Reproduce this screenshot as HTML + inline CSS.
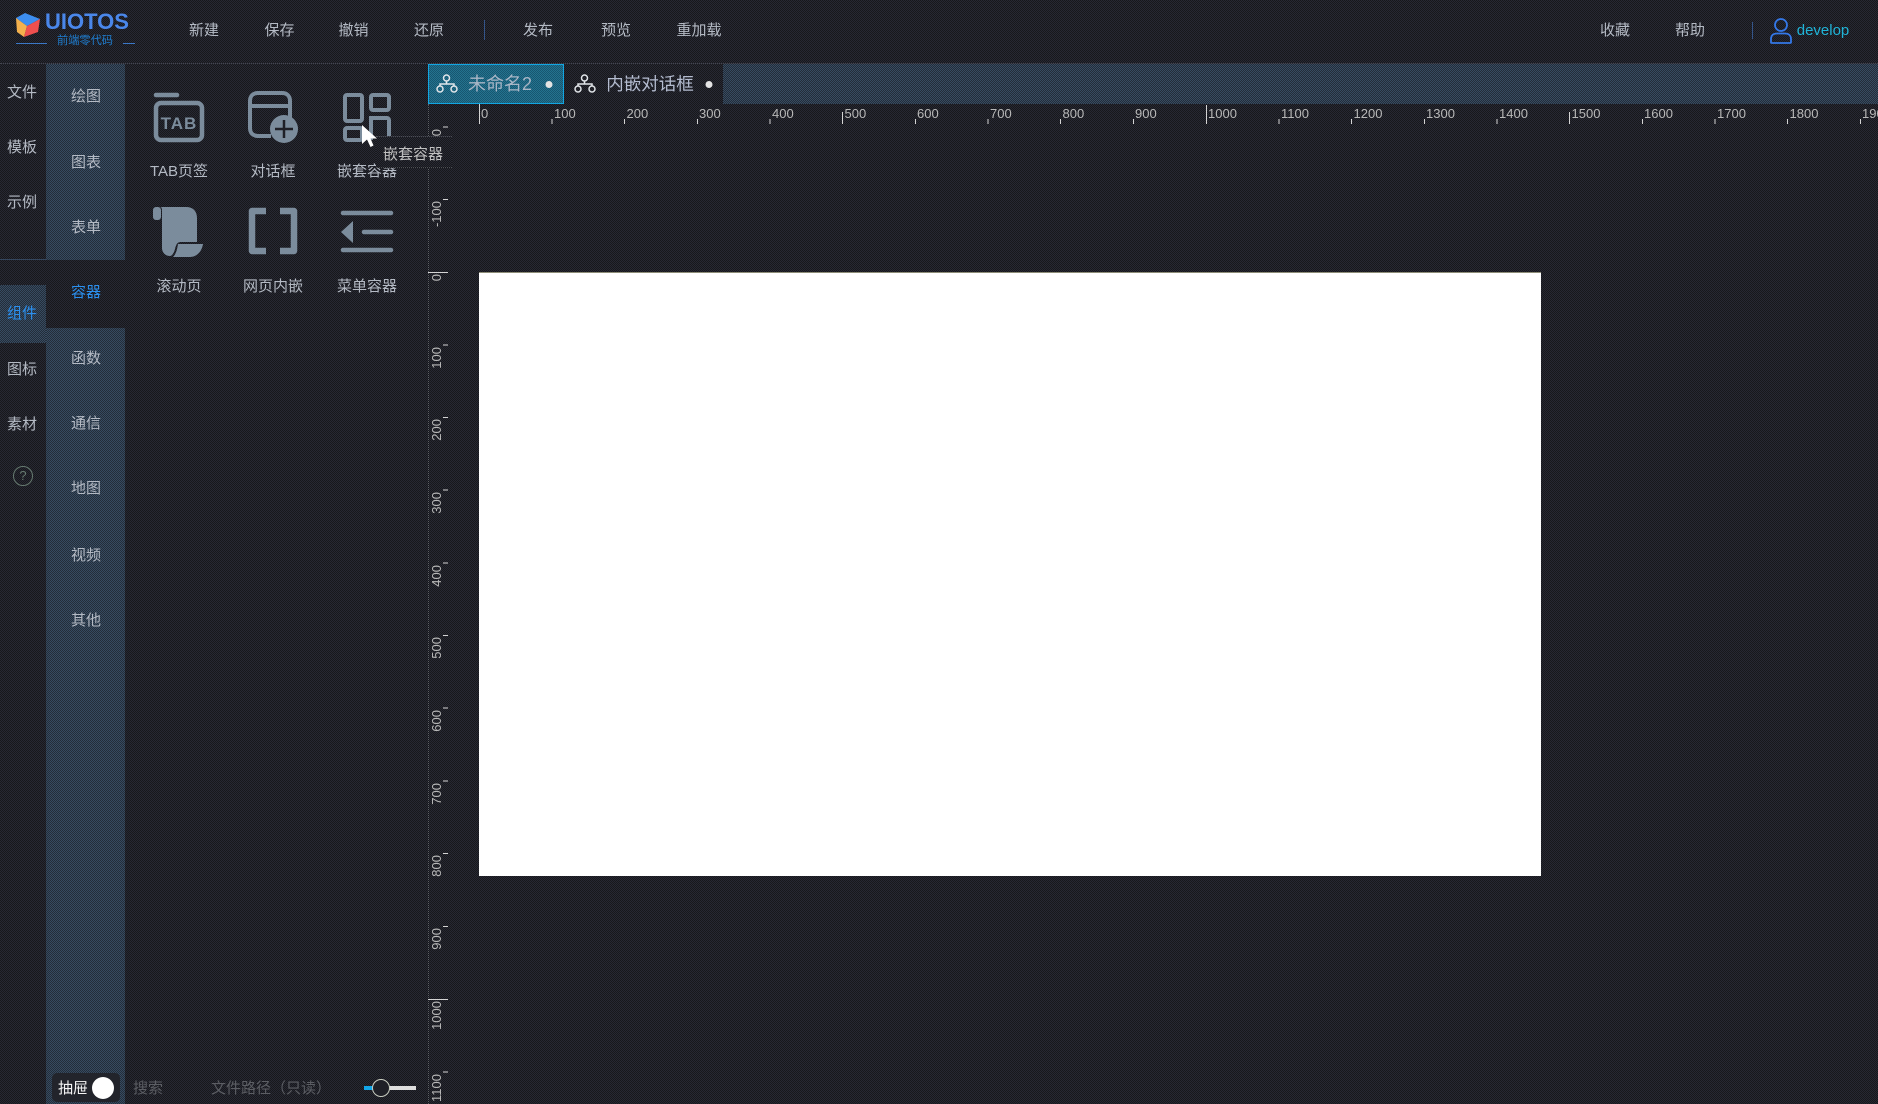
<!DOCTYPE html>
<html lang="zh"><head><meta charset="utf-8"><title>UIOTOS</title>
<style>
html,body{margin:0;padding:0;width:1878px;height:1104px;overflow:hidden}
body{position:relative;font-family:"Liberation Sans","Noto Sans CJK SC",sans-serif;color:#b4bac4;font-size:15px;
background-color:#1f2027;background-image:conic-gradient(#272833 25%,#17181b 0 50%,#272833 0 75%,#17181b 0);background-size:2px 2px}
.a{position:absolute}
.t{position:absolute;white-space:nowrap;line-height:20px;transform:translate(-50%,-50%);margin-top:2px}
.panel{background-color:#2d3c4d;background-image:conic-gradient(#374b61 25%,#232d39 0 50%,#374b61 0 75%,#232d39 0);background-size:2px 2px}
.dark{background-color:#1f2027;background-image:conic-gradient(#272833 25%,#17181b 0 50%,#272833 0 75%,#17181b 0);background-size:2px 2px}
.blue{color:#2b90ef}
svg{position:absolute;left:0;top:0}
</style></head><body>

<div class="a" style="left:0;top:63px;width:1878px;border-top:1px dotted #44464f"></div>
<div class="a panel" style="left:46px;top:64px;width:79px;height:1040px"></div>
<div class="a dark" style="left:46px;top:260px;width:79px;height:68px"></div>
<div class="a panel" style="left:0;top:285px;width:46px;height:58px"></div>
<div class="a" style="left:0;top:259px;width:46px;border-top:1px solid #34465e"></div>
<div class="a panel" style="left:723px;top:64px;width:1155px;height:40px"></div>
<div class="a" style="left:428px;top:64px;width:136px;height:40px;box-sizing:border-box;border:1.5px solid #12a6e2;background-color:#1d6582;background-image:conic-gradient(#24738f 25%,#175670 0 50%,#24738f 0 75%,#175670 0);background-size:2px 2px"></div>
<div class="a" style="left:428px;top:104px;height:1000px;border-left:1px dotted #5d6068"></div>

<!-- logo -->
<svg width="140" height="56" viewBox="0 0 140 56" style="left:0;top:0">
<path d="M16 18 L25 13 L40 19 L27 26 Z" fill="#3d8ef0"/>
<path d="M16 18 L27 26 L24 37 L17 32 Z" fill="#f4b14d"/>
<path d="M27 26 L40 19 L38 32 L24 37 Z" fill="#ef4f4f"/>
<path d="M16 43.500H47M123 43.500H135" stroke="#3b78c8" stroke-width="1"/>
</svg>
<div class="t" style="left:87px;top:20px;font-size:22px;font-weight:bold;color:#4a87ea">UIOTOS</div>
<div class="t" style="left:85px;top:39px;font-size:11.200px;color:#1f7ed0">前端零代码</div>

<!-- nav -->
<div class="t" style="left:204px;top:29px">新建</div>
<div class="t" style="left:279.500px;top:29px">保存</div>
<div class="t" style="left:353.500px;top:29px">撤销</div>
<div class="t" style="left:429px;top:29px">还原</div>
<div class="a" style="left:484px;top:20px;width:1px;height:20px;background:#34558a"></div>
<div class="t" style="left:538px;top:29px">发布</div>
<div class="t" style="left:616px;top:29px">预览</div>
<div class="t" style="left:699px;top:29px">重加载</div>
<div class="t" style="left:1615px;top:29px">收藏</div>
<div class="t" style="left:1690px;top:29px">帮助</div>
<div class="a" style="left:1752px;top:22px;width:1px;height:17px;background:#34558a"></div>
<svg width="30" height="30" viewBox="0 0 30 30" style="left:1766px;top:16px">
<circle cx="15" cy="9" r="6" fill="none" stroke="#3478e8" stroke-width="1.800"/>
<path d="M5 26.500V23C5 19 8 17.500 11 17.500H19C22 17.500 25 19 25 23V26.500C25 27 24.500 27 24 27H6C5.500 27 5 27 5 26.500Z" fill="none" stroke="#3478e8" stroke-width="1.800"/>
</svg>
<div class="t" style="left:1823px;top:29px;font-size:15px;color:#20b4d8">develop</div>

<!-- column 1 -->
<div class="t" style="left:22px;top:91px">文件</div>
<div class="t" style="left:22px;top:146px">模板</div>
<div class="t" style="left:22px;top:201px">示例</div>
<div class="t blue" style="left:22px;top:312px">组件</div>
<div class="t" style="left:22px;top:368px">图标</div>
<div class="t" style="left:22px;top:423px">素材</div>
<div class="t" style="left:23px;top:474px;width:18px;height:18px;line-height:18px;border:1.300px solid #667a70;border-radius:50%;text-align:center;font-size:13px;color:#667a70">?</div>

<!-- column 2 -->
<div class="t" style="left:86px;top:95px">绘图</div>
<div class="t" style="left:86px;top:161px">图表</div>
<div class="t" style="left:86px;top:226px">表单</div>
<div class="t blue" style="left:86px;top:291px">容器</div>
<div class="t" style="left:86px;top:357px">函数</div>
<div class="t" style="left:86px;top:422px">通信</div>
<div class="t" style="left:86px;top:487px">地图</div>
<div class="t" style="left:86px;top:554px">视频</div>
<div class="t" style="left:86px;top:619px">其他</div>

<!-- component icons -->
<svg width="440" height="300" viewBox="0 0 440 300">
<g fill="none" stroke="#7b8c9c" stroke-width="4.500">
<path d="M156 95H177" stroke-linecap="round"/>
<rect x="156" y="103" width="46" height="37" rx="5"/>
<path d="M290 121V101C290 96 287 93 282 93H258C253 93 250 96 250 101V128C250 133 253 136 258 136H271" stroke-width="4"/>
<path d="M250 106H290" stroke-width="4"/>
<g stroke-width="4">
<rect x="345" y="95" width="17" height="26" rx="2"/>
<rect x="371" y="95" width="18" height="15" rx="2"/>
<rect x="345" y="128" width="17" height="12" rx="2"/>
<path d="M371 140V118H387C388 118 389 119 389 120V137"/>
</g>
<path d="M266 211H252V251H266M280 211H294V251H280" stroke-width="6.500" stroke-linejoin="round"/>
<path d="M343 213H391M364 232H391M343 250H391" stroke-width="4.500" stroke-linecap="round"/>
</g>
<text x="179" y="129" text-anchor="middle" font-family="Liberation Sans" font-weight="bold" font-size="17" letter-spacing="1" fill="#7b8c9c">TAB</text>
<circle cx="284" cy="129" r="14" fill="#7b8c9c"/>
<path d="M284 120V138M275 129H293" stroke="#1f2027" stroke-width="2.500"/>
<rect x="153" y="207" width="8" height="13" rx="3" fill="#7b8c9c"/>
<path d="M160 207H186C193 207 197 211 197 218V242H181C177 242 176 245 175 249C174 253 172 256 170 256C165 256 162 252 162 248V212C162 209 162 207 160 207Z" fill="#7b8c9c"/>
<path d="M178 244H203C202 251 197 257 190 257H173C176 254 177 250 178 244Z" fill="#7b8c9c"/>
<path d="M353 221V243L341 232Z" fill="#7b8c9c"/>
</svg>

<div class="t" style="left:179px;top:170px">TAB页签</div>
<div class="t" style="left:273px;top:170px">对话框</div>
<div class="t" style="left:367px;top:170px">嵌套容器</div>
<div class="t" style="left:179px;top:285px">滚动页</div>
<div class="t" style="left:273px;top:285px">网页内嵌</div>
<div class="t" style="left:367px;top:285px">菜单容器</div>

<!-- tooltip + cursor -->
<div class="a dark" style="left:376px;top:136px;width:76px;height:32px;border-top:1px dotted #4d4f55;border-bottom:1px dotted #4d4f55;box-sizing:border-box"></div>
<div class="t" style="left:413px;top:153px;color:#c0c0c0">嵌套容器</div>
<svg width="20" height="26" viewBox="0 0 20 26" style="left:360px;top:123px">
<path d="M2 2V21L7 16.500L10.500 24L13.500 22.500L10.500 15.500H17Z" fill="#fff"/>
</svg>

<!-- tabs -->
<svg width="320" height="44" viewBox="0 0 320 44" style="left:429px;top:61px" fill="none" stroke="#e2e6ea" stroke-width="1.500">
<g><circle cx="17.500" cy="17" r="3"/><circle cx="11" cy="28" r="3"/><circle cx="25" cy="28" r="3"/><path d="M17.500 20V23M11 25V23H25V25"/></g>
<g transform="translate(138 0)"><circle cx="17.500" cy="17" r="3"/><circle cx="11" cy="28" r="3"/><circle cx="25" cy="28" r="3"/><path d="M17.500 20V23M11 25V23H25V25"/></g>
<circle cx="120" cy="23.500" r="3.500" fill="#e4e4e4" stroke="none"/>
<circle cx="280" cy="23.500" r="3.500" fill="#e4e4e4" stroke="none"/>
</svg>
<div class="t" style="left:500px;top:82px;font-size:18px;color:#a9b6c6">未命名2</div>
<div class="t" style="left:650px;top:82px;font-size:17.500px;color:#b4bcd0">内嵌对话框</div>

<!-- rulers -->
<svg width="1878" height="1104" viewBox="0 0 1878 1104" font-family="Liberation Sans" font-size="13" fill="#b8b8b8">
<g stroke="#d4d4d4" stroke-width="1" fill="none">
<path d="M479.500 104V124M552 119V124M624.500 119V124M697.500 119V124M770 119V124M842.500 112V124M915.500 119V124M988 119V124M1060.500 119V124M1133.500 119V124M1206.500 105V124M1279 119V124M1351.500 119V124M1424.500 119V124M1497 119V124M1569.500 112V124M1642.500 119V124M1715 119V124M1787.500 119V124M1860.500 119V124"/>
<path d="M443 127H448M443 199.500H448M428 272.500H448M443 345H448M443 417.500H448M443 490H448M443 563H448M443 635.500H448M443 708H448M443 781H448M443 853.500H448M443 926.500H448M428 999.500H448M443 1072H448"/>
</g>
<g transform="translate(-1 -1)">
<text x="482" y="119">0</text><text x="555" y="119">100</text><text x="627.500" y="119">200</text><text x="700" y="119">300</text><text x="773" y="119">400</text><text x="845.500" y="119">500</text><text x="918" y="119">600</text><text x="991" y="119">700</text><text x="1063.500" y="119">800</text><text x="1136" y="119">900</text><text x="1209" y="119">1000</text><text x="1282" y="119">1100</text><text x="1354.500" y="119">1200</text><text x="1427" y="119">1300</text><text x="1500" y="119">1400</text><text x="1572.500" y="119">1500</text><text x="1645" y="119">1600</text><text x="1718" y="119">1700</text><text x="1790.500" y="119">1800</text><text x="1863" y="119">1900</text>
</g>
<g text-anchor="end" transform="translate(-1 -2)">
<text transform="translate(442 131) rotate(-90)">0</text>
<text transform="translate(442 203) rotate(-90)">-100</text>
<text transform="translate(442 276) rotate(-90)">0</text>
<text transform="translate(442 349) rotate(-90)">100</text>
<text transform="translate(442 421) rotate(-90)">200</text>
<text transform="translate(442 494) rotate(-90)">300</text>
<text transform="translate(442 567) rotate(-90)">400</text>
<text transform="translate(442 639) rotate(-90)">500</text>
<text transform="translate(442 712) rotate(-90)">600</text>
<text transform="translate(442 785) rotate(-90)">700</text>
<text transform="translate(442 857) rotate(-90)">800</text>
<text transform="translate(442 930) rotate(-90)">900</text>
<text transform="translate(442 1003) rotate(-90)">1000</text>
<text transform="translate(442 1076) rotate(-90)">1100</text>
</g>
</svg>

<!-- canvas -->
<div class="a" style="left:479px;top:272px;width:1062px;height:604px;background:#fff;box-sizing:border-box;border-top:1px solid #8e8e78"></div>

<!-- bottom bar -->
<div class="a" style="left:52px;top:1073px;width:68px;height:29px;background:#22242b;border-radius:5px"></div>
<div class="t" style="left:73px;top:1087px;color:#f4f4f4">抽屉</div>
<div class="a" style="left:92px;top:1077px;width:22px;height:22px;background:#fff;border-radius:50%"></div>
<div class="t" style="left:148px;top:1087px;color:#5c5e64">搜索</div>
<div class="t" style="left:271px;top:1087px;color:#5c5e64;font-size:15px">文件路径（只读）</div>
<div class="a" style="left:364px;top:1086px;width:52px;height:4px;background:#dedede"></div>
<div class="a" style="left:364px;top:1086px;width:10px;height:4px;background:#12a6e8"></div>
<div class="a" style="left:372px;top:1079px;width:16px;height:16px;border:1.500px solid #c8ccc0;border-radius:50%;background:#1f2027"></div>

</body></html>
